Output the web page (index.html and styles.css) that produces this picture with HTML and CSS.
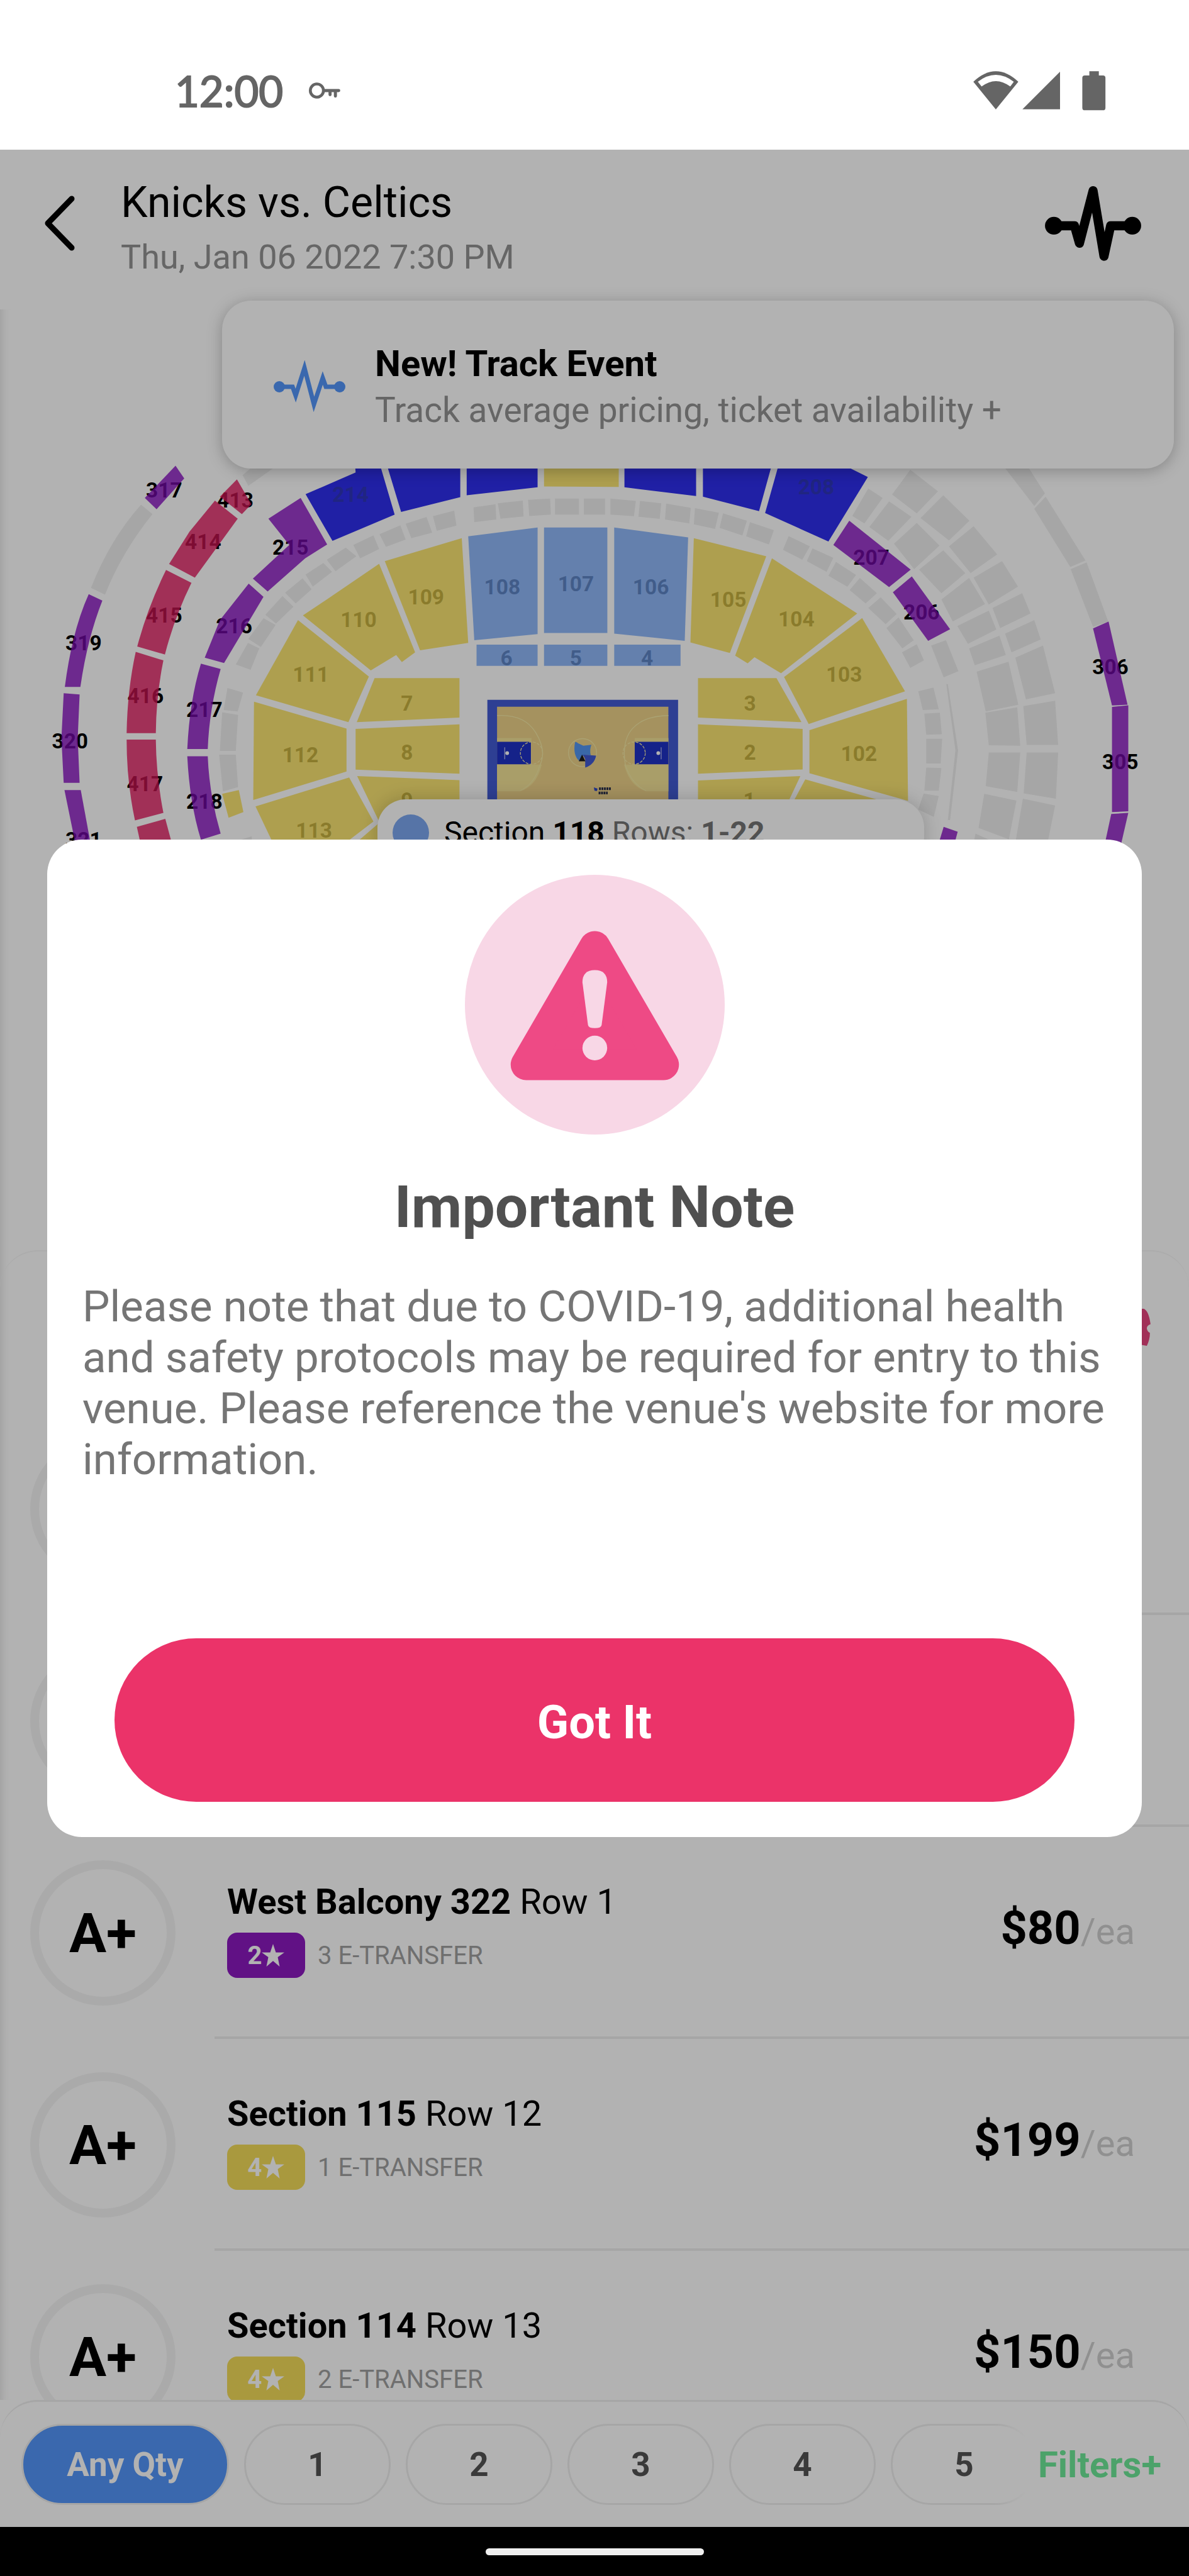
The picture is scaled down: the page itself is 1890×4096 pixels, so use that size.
FILE: index.html
```
<!DOCTYPE html>
<html lang="en">
<head>
    <meta charset="UTF-8">
    <meta name="viewport" content="width=device-width, initial-scale=1.0">
    <title>Knicks vs. Celtics</title>
    <link rel="stylesheet" href="styles.css">
</head>
<body>
    <!-- Status bar -->
    <div class="status-bar">
        <span class="clock">12:00</span>
        <svg class="key-icon" viewBox="0 0 156 84">
            <circle cx="42" cy="42" r="32" fill="none" stroke="#656565" stroke-width="14"/>
            <path d="M74 42H148M106 44V62M132 44V69" fill="none" stroke="#656565" stroke-width="15" stroke-linecap="round"/>
        </svg>
        <svg class="signal-icons" viewBox="0 0 642 192" fill="#656565">
            <path d="M0 52Q109 -50 218 52L109 186Z"/>
            <path d="M22 52Q109 -15 196 52L179 75Q109 22 40 75Z" fill="#fff"/>
            <path d="M238 185L420 3V185Z"/>
            <path d="M562 1h46v20h20q12 0 12 12v145q0 12-12 12h-88q-12 0-12-12v-145q0-12 12-12h22z"/>
        </svg>
    </div>

    <main class="app">
        <header class="header">
            <button class="icon-btn" aria-label="Back">
                <svg class="back-icon" viewBox="0 0 52 90">
                    <path d="M46 6L8 45L46 84" fill="none" stroke="#000" stroke-width="9" stroke-linecap="round" stroke-linejoin="round"/>
                </svg>
            </button>
            <div class="event">
                <h1>Knicks vs. Celtics</h1>
                <p>Thu, Jan 06 2022 7:30 PM</p>
            </div>
            <button class="icon-btn" aria-label="Track event">
                <svg class="pulse-icon" viewBox="380 655 475 375">
                    <circle cx="426" cy="853" r="43"/>
                    <circle cx="806" cy="853" r="43"/>
                    <path d="M426 853H526L550 938L616 683L669 1001L701 853H806" fill="none" stroke="#000" stroke-width="44" stroke-linecap="round" stroke-linejoin="round"/>
                </svg>
            </button>
        </header>

        <div class="content">
            <!-- Seating map -->
            <div class="map">
                <svg class="seating" viewBox="0 500 1920 1520">
                    <g class="labels">
                        <text x="265" y="804">317</text>
                        <text x="380" y="820">413</text>
                        <text x="328" y="887">414</text>
                        <text x="265" y="1006">415</text>
                        <text x="235" y="1136">416</text>
                        <text x="234" y="1278">417</text>
                        <text x="135" y="1051">319</text>
                        <text x="113" y="1209">320</text>
                        <text x="135" y="1369">321</text>
                        <text x="469" y="896">215</text>
                        <text x="378" y="1023">216</text>
                        <text x="330" y="1158">217</text>
                        <text x="330" y="1307">218</text>
                        <text x="688" y="976">109</text>
                        <text x="579" y="1013">110</text>
                        <text x="502" y="1101">111</text>
                        <text x="485" y="1231">112</text>
                        <text x="507" y="1353">113</text>
                        <text x="811" y="960">108</text>
                        <text x="930" y="955">107</text>
                        <text x="1051" y="960">106</text>
                        <text x="818" y="1075">6</text>
                        <text x="930" y="1075">5</text>
                        <text x="1045" y="1075">4</text>
                        <text x="657" y="1148">7</text>
                        <text x="657" y="1227">8</text>
                        <text x="657" y="1305">9</text>
                        <text x="1407" y="912">207</text>
                        <text x="1488" y="1001">206</text>
                        <text x="1176" y="980">105</text>
                        <text x="1286" y="1012">104</text>
                        <text x="1363" y="1101">103</text>
                        <text x="1387" y="1229">102</text>
                        <text x="1211" y="1148">3</text>
                        <text x="1211" y="1227">2</text>
                        <text x="1210" y="1305">1</text>
                        <text x="1793" y="1089">306</text>
                        <text x="1809" y="1243">305</text>
                    </g>
                    <!-- west half -->
                    <g transform="translate(0 720) scale(.6122 .4337)">
                        <g class="closed">
                            <path d="M372 220L402 255Q320 400 277 555L240 530Q290 350 372 220Z"/>
                            <path d="M640 110L665 80L720 85L655 150Z"/>
                            <path d="M1142 263L1198 242L1204 298L1152 317ZM1070 291L1125 266L1140 324L1085 345ZM1001 330L1056 297L1070 350L1018 377ZM932 370L985 334L1000 385L950 420ZM862 425L912 380L940 412L885 468ZM806 480L853 437L876 470L825 525ZM752 548L798 494L822 535L780 588ZM700 630L745 560L774 600L728 663ZM695 643L727 668L688 750L655 720ZM654 735L684 755L661 835L622 815Z"/>
                            <path d="M600 903L641 920L627 990L590 985ZM586 993L628 1003L622 1137L580 1137ZM578 1151L622 1151L628 1272L588 1288ZM630 1470L664 1455L664 1490L630 1490Z"/>
                            <path d="M1249 230L1307 218L1309 275L1251 285ZM1313 215L1379 205L1381 264L1320 272ZM1393 202L1451 197L1453 257L1396 262ZM1464 197L1527 197L1527 257L1464 257ZM1540 197L1596 197L1596 257L1540 257Z"/>
                        </g>
                        <g class="purple">
                            <path d="M463 75L486 122L413 237L382 195Z"/>
                            <path d="M234 553L270 577Q230 720 212 899L171 899Q190 690 234 553Z"/>
                            <path d="M168 922L210 927L205 1090L210 1256L168 1256L162 1090Z"/>
                            <path d="M170 1283L213 1283L240 1490L200 1490Z"/>
                            <path d="M793 195L863 368L805 420L706 543L667 495L763 370L708 272Z"/>
                            <path d="M656 514L695 563L591 810L540 790L580 650Z"/>
                            <path d="M530 812L582 832Q552 980 548 1130L494 1130Q500 950 530 812Z"/>
                            <path d="M494 1157L548 1157Q552 1300 582 1445L530 1468Q500 1330 494 1157Z"/>
                        </g>
                        <g class="pink">
                            <path d="M625 126L663 218L638 255L580 190Z"/>
                            <path d="M567 205L627 272L514 492L446 441L500 320Z"/>
                            <path d="M438 463L505 511Q460 640 435 778L362 748Q390 600 438 463Z"/>
                            <path d="M358 768L431 800Q412 930 411 1071L334 1071Q336 910 358 768Z"/>
                            <path d="M334 1095L411 1095Q412 1230 431 1368L356 1396Q334 1250 334 1095Z"/>
                            <path d="M361 1420L436 1390L455 1490L372 1490Z"/>
                        </g>
                        <g class="blue">
                            <path d="M936 60L938 100L806 181L877 355L1041 257L1000 60Z"/>
                            <path d="M1018 60L1214 60L1214 192L1058 247Z"/>
                            <path d="M1231 60L1418 60L1418 155L1231 185Z"/>
                        </g>
                        <g class="yellow">
                            <path d="M1435 60L1632 60L1632 154L1435 152Z"/>
                            <path d="M1218 345L1235 735L1108 762L1015 430Z"/>
                            <path d="M1000 440L1095 770L1060 806L1045 780L978 837L799 632L860 575Z"/>
                            <path d="M786 650L973 860L919 1030L675 930Z"/>
                            <path d="M670 954L914 1054L914 1214L668 1320Z"/>
                            <path d="M921 1236L985 1400L920 1470L720 1480L674 1344Z"/>
                            <path d="M988 866L1212 866L1212 1013L941 1030Z"/>
                            <path d="M938 1055L1212 1038L1212 1222L938 1207Z"/>
                            <path d="M942 1231L1212 1246L1212 1340L1020 1400L1000 1400Z"/>
                            <path d="M1000 1405L1000 1490L930 1490Z"/>
                            <path d="M586 1297L630 1283L642 1365L603 1386Z"/>
                        </g>
                        <g class="sky">
                            <path d="M1235 338L1418 305L1418 702L1251 725Z"/>
                            <path d="M1435 305L1602 305L1602 698L1435 698Z"/>
                            <path d="M1257 741L1418 741L1418 820L1257 820Z"/>
                            <path d="M1435 741L1602 741L1602 820L1435 820Z"/>
                        </g>
                    </g>
                    <!-- east half -->
                    <g transform="translate(960 720) scale(.6122 .4337)">
                        <g class="closed">
                            <path d="M42 197L109 206L104 263L42 257ZM120 206L176 215L172 273L116 265ZM189 216L254 232L250 290L186 275ZM265 233L328 250L318 310L262 293ZM339 252L402 280L390 335L330 306ZM410 285L473 315L460 368L400 338Z"/>
                            <path d="M512 337L568 375L548 425L497 388ZM575 383L630 418L612 470L560 430ZM637 433L690 482L667 526L617 485ZM700 493L745 550L715 588L673 538ZM755 565L797 627L768 665L722 605ZM802 640L842 725L812 755L770 680ZM850 740L869 800L833 828L811 770Z"/>
                            <path d="M854 915L894 901L908 982L866 985ZM870 998L911 995L916 1075L875 1077ZM875 1092L917 1092L913 1184L875 1184ZM875 1199L915 1201L908 1285L870 1285ZM868 1296L908 1305L895 1383L854 1355Z"/>
                            <path d="M888 745L927 725L960 840L921 863Z"/>
                            <path d="M722 160L760 195L712 290L680 262ZM777 208L836 265L775 355L725 303ZM833 90L906 170L850 252L785 182ZM920 185L989 280L935 353L860 270ZM850 288L910 372L843 460L790 365ZM1000 300L1062 405L992 475L935 375ZM920 390L978 475L915 550L856 462ZM1075 430L1117 525L1040 592L1000 492ZM988 493L1030 590L945 655L915 573Z"/>
                            <path d="M1128 550L1150 625L1070 680L1050 605ZM1040 615L1060 685L985 738L957 672ZM1160 650L1177 722L1100 770L1083 700ZM1068 708L1085 780L1003 818L988 755ZM1183 745L1215 922L1138 945L1110 790ZM1092 805L1118 965L1032 990L1008 842ZM1215 950L1223 1115L1140 1115L1131 970ZM1115 975L1123 1118L1040 1116L1031 995Z"/>
                            <path d="M1140 1143L1223 1143L1217 1315L1132 1295ZM1040 1143L1123 1143L1115 1290L1032 1268ZM1130 1315L1215 1340L1195 1480L1110 1480ZM1028 1297L1113 1322L1093 1466L1013 1424ZM1005 1445L1060 1480L1000 1480Z"/>
                            <path d="M1070 60L1135 60L1188 178L1160 225ZM1190 190L1295 428L1255 452L1160 235ZM1298 435L1355 655L1315 675L1256 460Z"/>
                            <path d="M928 888L952 1135L932 1395L938 1395L959 1135L932 888Z"/>
                        </g>
                        <g class="blue">
                            <path d="M79 60L268 60L268 188L79 155Z"/>
                            <path d="M286 60L470 60L434 244L286 190Z"/>
                            <path d="M488 60L640 60L721 117L617 357L450 251Z"/>
                        </g>
                        <g class="purple">
                            <path d="M672 280L834 462L777 527L630 370Z"/>
                            <path d="M837 487L938 684L880 727L787 546Z"/>
                            <path d="M1356 655L1406 965L1365 968L1315 681Z"/>
                            <path d="M1365 973L1408 967L1408 1362L1365 1365Z"/>
                            <path d="M1363 1372L1408 1368L1388 1490L1345 1490Z"/>
                            <path d="M921 1420L958 1438L948 1490L906 1490Z"/>
                        </g>
                        <g class="yellow">
                            <path d="M262 345L453 412L357 772L253 733Z"/>
                            <path d="M468 420L693 625L492 848L422 788L404 811L371 782Z"/>
                            <path d="M706 642L819 915L565 1037L500 862Z"/>
                            <path d="M824 943L827 1323L567 1220L567 1060Z"/>
                            <path d="M273 866L480 866L546 1030L273 1013Z"/>
                            <path d="M273 1038L549 1055L549 1206L273 1222Z"/>
                            <path d="M273 1247L543 1231L510 1330L273 1330Z"/>
                            <path d="M556 1243L750 1320L750 1330L523 1330Z"/>
                        </g>
                        <g class="sky">
                            <path d="M52 305L247 342L238 727L52 700Z"/>
                            <path d="M52 741L227 741L227 820L52 820Z"/>
                        </g>
                    </g>
                    <g class="labels labels-blue">
                        <text x="566" y="811">214</text>
                        <text x="1318" y="799">208</text>
                    </g>
                    <!-- court -->
                    <g transform="translate(780 1120) scale(.3333)">
                        <path d="M21 32H945V600H21Z" fill="#425bd3"/>
                        <path d="M68 65H898V600H68Z" fill="#edd189"/>
                        <path d="M68 217H235V345H285Q260 450 180 475H68ZM898 217H735V345H683Q710 450 790 475H898Z" fill="#f3e297"/>
                        <path d="M235 217Q285 260 285 345H235ZM735 217Q683 260 683 345H735Z" fill="#edd189"/>
                        <path d="M68 235H232V344H68ZM735 235H898V344H735Z" fill="#1f31c5"/>
                        <g fill="none" stroke="#f4e9a5" stroke-width="4">
                            <path d="M68 108Q200 100 255 190T275 350Q250 440 180 472M898 108Q780 110 725 170T690 350Q720 440 790 472"/>
                            <circle cx="482" cy="288" r="68"/>
                            <circle cx="235" cy="290" r="54" stroke-dasharray="14 6"/>
                            <circle cx="732" cy="290" r="54" stroke-dasharray="14 6"/>
                        </g>
                        <path d="M105 262V320M863 262V320" stroke="#dfe2f5" stroke-width="3"/>
                        <circle cx="117" cy="290" r="9" fill="#fff"/>
                        <circle cx="849" cy="290" r="9" fill="#fff"/>
                        <path d="M446 236Q456 236 460 242L486 254L525 250Q515 275 522 300H490L466 328Q434 300 446 236Z" fill="#5396f0"/>
                        <path d="M484 298L548 302Q540 345 495 360V320Z" fill="#4159d2"/>
                        <path d="M464 330L480 297L496 330Z" fill="#1c1c1c"/>
                        <path d="M537 456L555 462L552 474L540 472Z" fill="#2d46c4"/>
                        <path d="M562 463H620M560 483H604" fill="none" stroke="#2a2f4a" stroke-width="13" stroke-dasharray="9 3"/>
                    </g>
                </svg>
                <div class="map-tip">
                    <span class="dot"></span>
                    <p><span>Section <b>118</b></span> Rows: <b>1-22</b></p>
                </div>
            </div>

            <!-- Listings -->
            <section class="listings">
                <div class="listings-head">
                    <svg class="deal-icon" viewBox="0 0 75 60">
                        <path d="M8 0H64Q72 3 75 25Q69 27 69 32Q70 37 74 39Q74 50 69 60Q50 56 8 57Q0 57 0 49V8Q0 0 8 0Z" fill="#e7467e"/>
                    </svg>
                </div>
                <ul>
                    <li class="row">
                        <span class="grade"></span>
                        <div class="row-body"></div>
                    </li>
                    <li class="row">
                        <span class="grade"></span>
                        <div class="row-body"></div>
                    </li>
                    <li class="row">
                        <span class="grade">A+</span>
                        <div class="row-body">
                            <div class="seat">
                                <h2><b>West Balcony 322</b> Row 1</h2>
                                <p><span class="badge badge-purple">2<svg class="star" viewBox="0 0 24 24"><path d="M12 0L15 9H24L17 14L19 24L12 18L5 24L7 14L0 9H9Z"/></svg></span>3 E-TRANSFER</p>
                            </div>
                            <p class="price"><b>$80</b>/ea</p>
                        </div>
                    </li>
                    <li class="row">
                        <span class="grade">A+</span>
                        <div class="row-body">
                            <div class="seat">
                                <h2><b>Section 115</b> Row 12</h2>
                                <p><span class="badge badge-yellow">4<svg class="star" viewBox="0 0 24 24"><path d="M12 0L15 9H24L17 14L19 24L12 18L5 24L7 14L0 9H9Z"/></svg></span>1 E-TRANSFER</p>
                            </div>
                            <p class="price"><b>$199</b>/ea</p>
                        </div>
                    </li>
                    <li class="row">
                        <span class="grade">A+</span>
                        <div class="row-body">
                            <div class="seat">
                                <h2><b>Section 114</b> Row 13</h2>
                                <p><span class="badge badge-yellow">4<svg class="star" viewBox="0 0 24 24"><path d="M12 0L15 9H24L17 14L19 24L12 18L5 24L7 14L0 9H9Z"/></svg></span>2 E-TRANSFER</p>
                            </div>
                            <p class="price"><b>$150</b>/ea</p>
                        </div>
                    </li>
                </ul>
            </section>
        </div>

        <!-- Quantity filter -->
        <div class="filter-bar">
            <div class="quantities">
                <button class="qty qty-active">Any Qty</button>
                <button class="qty">1</button>
                <button class="qty">2</button>
                <button class="qty">3</button>
                <button class="qty">4</button>
                <button class="qty">5</button>
            </div>
            <button class="filters">Filters+</button>
        </div>

        <!-- Track event hint -->
        <div class="track-card">
            <svg class="track-icon" viewBox="0 0 116 84">
                <circle cx="10" cy="42" r="9" fill="#5396f9"/>
                <circle cx="106" cy="42" r="9" fill="#5396f9"/>
                <path d="M10 42H31L36 56L50 12L65 70L79 28L84 42H106" fill="none" stroke="#5396f9" stroke-width="7" stroke-miterlimit="8"/>
            </svg>
            <div>
                <h2>New! Track Event</h2>
                <p>Track average pricing, ticket availability +</p>
            </div>
        </div>

        <!-- Dialog -->
        <div class="backdrop">
            <div class="dialog" role="dialog" aria-labelledby="noteTitle">
                <svg class="warning-icon" viewBox="0 0 420 420">
                    <circle cx="210" cy="210" r="210" fill="#f8d7e6"/>
                    <path d="M210 116L321 307H99Z" fill="#ee4a85" stroke="#ee4a85" stroke-width="50" stroke-linejoin="round"/>
                    <path d="M190 174Q190 154 210 154T230 174L221 243Q220 248 210 248T199 243Z" fill="#f8d7e6"/>
                    <circle cx="210" cy="280" r="20" fill="#f8d7e6"/>
                </svg>
                <h2 id="noteTitle">Important Note</h2>
                <p>Please note that due to COVID-19, additional health and safety protocols may be required for entry to this venue. Please reference the venue's website for more information.</p>
                <button class="got-it">Got It</button>
            </div>
        </div>
    </main>

    <div class="nav-bar"><span class="home-pill"></span></div>
</body>
</html>
```
FILE: styles.css
```
* {
    margin: 0;
    padding: 0;
    box-sizing: border-box;
}

body {
    font-family: Roboto, sans-serif;
    background: #fff;
    color: #000;
    display: flex;
    flex-direction: column;
    height: 100vh;
    overflow: hidden;
}

button {
    font-family: inherit;
    background: none;
    border: none;
    cursor: pointer;
}

ul {
    list-style: none;
}

svg {
    display: block;
    flex: none;
}

/* Status bar */
.status-bar {
    display: flex;
    align-items: center;
    height: 238px;
    padding: 50px 132px 0 278px;
}

.clock {
    font-family: Lato, sans-serif;
    font-size: 67px;
    line-height: 80px;
    color: #656565;
    -webkit-text-stroke: 2px #656565;
}

.key-icon {
    width: 51px;
    height: 28px;
    margin-left: 40px;
}

.signal-icons {
    width: 211px;
    height: 63px;
    margin-left: auto;
}

/* App */
.app {
    position: relative;
    flex: 1;
    min-height: 0;
    display: flex;
    flex-direction: column;
    overflow: hidden;
}

.header {
    flex: none;
    display: flex;
    align-items: flex-start;
    height: 254px;
    padding: 44px 74px 0 68px;
}

.icon-btn {
    height: 146px;
}

.back-icon {
    width: 52px;
    height: 90px;
}

.pulse-icon {
    width: 156px;
    height: 123px;
}

.event {
    flex: 1;
    padding-left: 72px;
}

.event h1 {
    font-size: 68px;
    font-weight: 400;
    line-height: 80px;
}

.event p {
    margin-top: 15px;
    font-size: 54px;
    line-height: 64px;
    color: #929292;
}

.content {
    flex: 1;
    min-height: 0;
    overflow: hidden;
    box-shadow: inset 14px 0 12px -10px rgba(0, 0, 0, 0.1);
}

/* Map */
.map {
    position: relative;
    overflow: hidden;
}

.seating {
    width: 100%;
    height: auto;
}

.labels {
    font-size: 34px;
    font-weight: 700;
    text-anchor: middle;
}

.labels-blue {
    fill: #2e36ba;
}

.closed {
    fill: #eee;
}

.purple {
    fill: #840bbf;
    fill-opacity: 0.8;
}

.pink {
    fill: #e1175d;
    fill-opacity: 0.8;
}

.blue {
    fill: #2e2eed;
}

.yellow {
    fill: #f8dd4f;
    fill-opacity: 0.8;
}

.sky {
    fill: #74a6f6;
    fill-opacity: 0.8;
}

.map-tip {
    position: absolute;
    left: 600px;
    top: 779px;
    width: 869px;
    display: flex;
    align-items: center;
    gap: 24px;
    padding: 24px;
    background: #fff;
    border-radius: 45px;
    box-shadow: 0 0 30px rgba(0, 0, 0, 0.2);
}

.map-tip .dot {
    width: 58px;
    height: 58px;
    border-radius: 50%;
    background: #7ba7f0;
}

.map-tip p {
    font-size: 48px;
    line-height: 56px;
    color: #757575;
}

.map-tip p span {
    color: #000;
}

/* Listings */
.listings {
    border-top: 2px solid #f6f6f6;
    border-radius: 60px 60px 0 0;
}

.listings-head {
    display: flex;
    align-items: center;
    justify-content: flex-end;
    height: 241px;
    padding-right: 61px;
}

.deal-icon {
    width: 74px;
    height: 59px;
}

.row {
    display: flex;
    align-items: center;
    height: 337px;
    padding-left: 48px;
}

.grade {
    flex: none;
    display: flex;
    align-items: center;
    justify-content: center;
    width: 231px;
    height: 231px;
    border: 14px solid #f4f4f4;
    border-radius: 50%;
    font-size: 88px;
    font-weight: 700;
}

.row-body {
    flex: 1;
    align-self: stretch;
    display: flex;
    justify-content: space-between;
    align-items: center;
    margin-left: 62px;
    padding: 0 86px 6px 20px;
    border-bottom: 4px solid #eee;
}

.seat h2 {
    font-size: 56px;
    font-weight: 400;
    line-height: 64px;
}

.seat p {
    display: flex;
    align-items: center;
    gap: 20px;
    margin-top: 17px;
    font-size: 40px;
    color: #a0a0a0;
}

.badge {
    display: flex;
    align-items: center;
    justify-content: center;
    width: 124px;
    height: 72px;
    border-radius: 16px;
    font-weight: 700;
    color: #fff;
}

.badge-purple {
    background: #8b19bf;
}

.badge-yellow {
    background: #f3db59;
}

.star {
    width: 36px;
    height: 36px;
    fill: #fff;
}

.price {
    font-size: 58px;
    line-height: 82px;
    color: #cfcfcf;
}

.price b {
    font-size: 74px;
    color: #000;
}

/* Filter bar */
.filter-bar {
    flex: none;
    display: flex;
    align-items: center;
    height: 202px;
    border-top: 3px solid #eee;
    border-radius: 60px 60px 0 0;
}

.quantities {
    flex: 1;
    display: flex;
    gap: 24px;
    padding-left: 34px;
    overflow: hidden;
    -webkit-mask-image: linear-gradient(to left, transparent, #000 50px);
    mask-image: linear-gradient(to left, transparent, #000 50px);
}

.qty {
    flex: none;
    width: 233px;
    height: 129px;
    border: 3px solid #eee;
    border-radius: 65px;
    font-size: 53px;
    font-weight: 700;
    color: #535353;
}

.qty-active {
    width: 330px;
    background: #5396f9;
    color: #fff;
}

.filters {
    padding: 0 44px 0 20px;
    font-size: 58px;
    font-weight: 700;
    color: #6ee998;
}

/* Track card */
.track-card {
    position: absolute;
    top: 240px;
    right: 24px;
    left: 353px;
    display: flex;
    align-items: center;
    gap: 46px;
    height: 267px;
    padding: 6px 0 0 81px;
    background: #fff;
    border-radius: 46px;
    box-shadow: 0 4px 24px rgba(0, 0, 0, 0.25);
}

.track-icon {
    width: 116px;
    height: 84px;
}

.track-card h2 {
    font-size: 58px;
    line-height: 64px;
}

.track-card p {
    margin-top: 10px;
    font-size: 55px;
    line-height: 64px;
    color: #929292;
}

/* Dialog */
.backdrop {
    position: absolute;
    inset: 0;
    display: flex;
    align-items: center;
    padding: 0 75px;
    background: rgba(0, 0, 0, 0.3);
}

.dialog {
    flex: 1;
    display: flex;
    flex-direction: column;
    padding: 56px;
    background: #fff;
    border-radius: 55px;
}

.warning-icon {
    align-self: center;
    width: 413px;
    height: 413px;
}

.dialog h2 {
    margin-top: 63px;
    font-size: 93px;
    line-height: 106px;
    text-align: center;
    color: #505050;
}

.dialog p {
    margin-top: 64px;
    font-size: 69px;
    line-height: 81px;
    color: #757575;
}

.got-it {
    height: 260px;
    margin: 244px 51px 0;
    padding-top: 6px;
    border-radius: 130px;
    background: #eb3369;
    color: #fff;
    font-size: 74px;
    font-weight: 700;
}

/* Navigation bar */
.nav-bar {
    display: flex;
    align-items: center;
    justify-content: center;
    height: 78px;
    background: #000;
}

.home-pill {
    width: 347px;
    height: 11px;
    border-radius: 6px;
    background: #eee;
}
```
